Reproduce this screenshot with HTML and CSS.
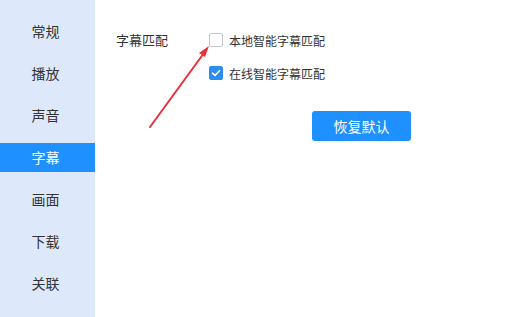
FILE: index.html
```html
<!DOCTYPE html>
<html lang="zh-CN">
<head>
  <meta charset="UTF-8" />
  <title>设置</title>
  <link rel="stylesheet" href="styles.css">
</head>
<body>
  <div class="settings">
    <ul class="side-menu">
      <li>常规</li>
      <li>播放</li>
      <li>声音</li>
      <li class="active">字幕</li>
      <li>画面</li>
      <li>下载</li>
      <li>关联</li>
    </ul>

    <div class="panel">
      <div class="form-row">
        <div class="row-label">字幕匹配</div>
        <div class="options">
          <label class="check">
            <span class="box"></span>
            本地智能字幕匹配
          </label>
          <label class="check">
            <span class="box checked">
              <svg viewBox="0 0 14 14" width="14" height="14">
                <path d="M3.5 7.2 L6 9.5 L10.5 4.8" fill="none" stroke="#fff" stroke-width="1.6" stroke-linecap="round" stroke-linejoin="round"/>
              </svg>
            </span>
            在线智能字幕匹配
          </label>
        </div>
      </div>
      <div class="actions">
        <button class="btn-reset">恢复默认</button>
      </div>
    </div>

    <svg class="arrow" width="508" height="317" viewBox="0 0 508 317">
      <line x1="150" y1="127" x2="204" y2="53" stroke="#e8303a" stroke-width="2" stroke-linecap="round"/>
      <polygon points="209,46 199,53 205,57" fill="#e8303a"/>
    </svg>
  </div>
</body>
</html>
```

FILE: styles.css
```css
* {
  margin: 0;
  padding: 0;
  box-sizing: border-box;
  font-family: "Noto Sans CJK SC", "Noto Sans", sans-serif;
}

body {
  background: #fff;
  width: 508px;
  height: 317px;
  overflow: hidden;
}

.settings {
  position: relative;
  display: flex;
  height: 317px;
}

.side-menu {
  list-style: none;
  width: 95px;
  background: #dde9fb;
  padding-top: 17px;
  display: flex;
  flex-direction: column;
  gap: 13px;
}

.side-menu li {
  height: 29px;
  line-height: 29px;
  text-align: center;
  padding-right: 4px;
  font-size: 14px;
  color: #333;
}

.side-menu li.active {
  background: #1e90ff;
  color: #fff;
}

.panel {
  flex: 1;
  padding: 29px 0 0 21px;
}

.form-row {
  display: flex;
}

.row-label {
  width: 93px;
  font-size: 13px;
  color: #333;
  line-height: 22px;
}

.options {
  display: flex;
  flex-direction: column;
  gap: 11px;
}

.check {
  display: flex;
  align-items: center;
  gap: 6px;
  height: 22px;
  font-size: 12px;
  color: #333;
}

.check .box {
  width: 14px;
  height: 14px;
  border: 1px solid #c4c8cf;
  border-radius: 2px;
  background: #fff;
  display: flex;
}

.check .box.checked {
  border-color: #2d8cf0;
  background: #2d8cf0;
}

.check .box svg {
  margin: -1px;
}

.actions {
  padding: 27px 0 0 196px;
}

.btn-reset {
  width: 99px;
  height: 30px;
  border: none;
  border-radius: 3px;
  background: #1e90ff;
  color: #fff;
  font-size: 14px;
  cursor: pointer;
}

.arrow {
  position: absolute;
  left: 0;
  top: 0;
  pointer-events: none;
}
```
